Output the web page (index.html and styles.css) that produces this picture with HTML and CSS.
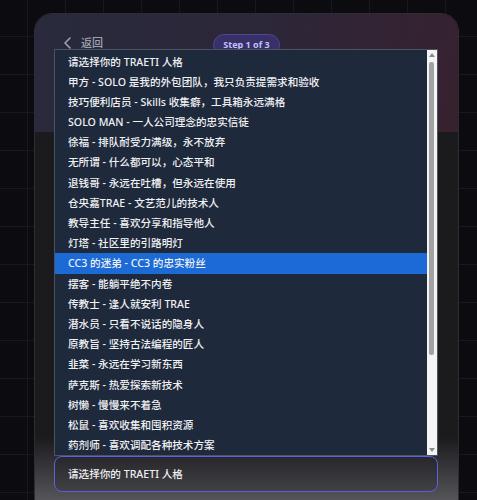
FILE: index.html
```html
<!DOCTYPE html>
<html lang="zh-CN">
<head>
  <meta charset="UTF-8">
  <meta name="viewport" content="width=device-width, initial-scale=1.0">
  <title>TRAETI 人格测试</title>
  <link rel="stylesheet" href="styles.css">
</head>
<body>
  <div class="card">
    <div class="card-head">
      <a class="back" href="#">
        <svg width="9" height="12" viewBox="0 0 9 12"><path d="M7 1 2 6l5 5" fill="none" stroke="currentColor" stroke-width="1.6" stroke-linecap="round" stroke-linejoin="round"/></svg>
        <span>返回</span>
      </a>
      <span class="step">Step 1 of 3</span>
      <span></span>
    </div>

    <div class="card-body">
      <div class="select-wrap">
        <div class="options">
          <ul class="option-list">
            <li>请选择你的 TRAETI 人格</li>
            <li>甲方 - SOLO 是我的外包团队，我只负责提需求和验收</li>
            <li>技巧便利店员 - Skills 收集癖，工具箱永远满格</li>
            <li>SOLO MAN - 一人公司理念的忠实信徒</li>
            <li>徐福 - 排队耐受力满级，永不放弃</li>
            <li>无所谓 - 什么都可以，心态平和</li>
            <li>退钱哥 - 永远在吐槽，但永远在使用</li>
            <li>仓央嘉TRAE - 文艺范儿的技术人</li>
            <li>教导主任 - 喜欢分享和指导他人</li>
            <li>灯塔 - 社区里的引路明灯</li>
            <li class="active">CC3 的迷弟 - CC3 的忠实粉丝</li>
            <li>摆客 - 能躺平绝不内卷</li>
            <li>传教士 - 逢人就安利 TRAE</li>
            <li>潜水员 - 只看不说话的隐身人</li>
            <li>原教旨 - 坚持古法编程的匠人</li>
            <li>韭菜 - 永远在学习新东西</li>
            <li>萨克斯 - 热爱探索新技术</li>
            <li>树懒 - 慢慢来不着急</li>
            <li>松鼠 - 喜欢收集和囤积资源</li>
            <li>药剂师 - 喜欢调配各种技术方案</li>
          </ul>
          <div class="scrollbar">
            <span class="arrow up"></span>
            <span class="thumb"></span>
            <span class="arrow down"></span>
          </div>
        </div>
        <div class="select">请选择你的 TRAETI 人格</div>
      </div>
    </div>
  </div>
</body>
</html>
```

FILE: styles.css
```css
* {
  box-sizing: border-box;
}

body {
  margin: 0;
  height: 500px;
  overflow: hidden;
  font-family: "Noto Sans", "Noto Sans CJK SC", sans-serif;
  background-color: #0b0b10;
  background-image:
    linear-gradient(#181824 1px, transparent 1px),
    linear-gradient(90deg, #181824 1px, transparent 1px);
  background-size: 38px 38px;
  background-position: 27px 36px;
}

.card {
  width: 425px;
  margin: 13px 0 0 34px;
  border: 1px solid #2c2c34;
  border-radius: 18px 18px 0 0;
  overflow: hidden;
}

.card-head {
  height: 118px;
  padding: 20px 28px 0;
  display: grid;
  grid-template-columns: 1fr auto 1fr;
  align-items: start;
  background: linear-gradient(100deg, #292a3d 0%, #2c2739 50%, #37212f 100%);
}

.back {
  display: flex;
  align-items: center;
  gap: 9px;
  margin-top: 2px;
  color: #9fa1b0;
  text-decoration: none;
  font-size: 11px;
  font-weight: 500;
  line-height: 14px;
}

.step {
  padding: 0 9px;
  height: 22px;
  line-height: 20px;
  border-radius: 11px;
  border: 1px solid #4c4694;
  background: #373168;
  color: #c2c0fa;
  font-size: 9px;
  font-weight: 700;
}

.card-body {
  height: 380px;
  padding: 324px 20px 0 19px;
  background: linear-gradient(#1b1b1e 0, #1b1b1e 305px, #55555a 369px);
}

.select-wrap {
  position: relative;
}

.select {
  height: 36px;
  padding-left: 13px;
  line-height: 34px;
  border: 1px solid #5d5fe0;
  border-radius: 8px;
  background: rgba(20, 20, 24, 0.2);
  color: #eeeef2;
  font-size: 10.6px;
  font-weight: 500;
}

/* open list, drawn above the field */
.options {
  position: absolute;
  left: 0;
  right: 0;
  bottom: 100%;
  height: 407px;
  display: flex;
  border: 1px solid #4b5262;
  background: #1e293b;
}

.option-list {
  flex: 1;
  margin: 0;
  padding: 1.5px 0 0;
  list-style: none;
}

.option-list li {
  height: 20.2px;
  line-height: 20.2px;
  padding-left: 13px;
  color: #f0f1f4;
  font-size: 10.6px;
  font-weight: 500;
  white-space: nowrap;
}

.option-list li.active {
  background: #1b6ad6;
}

.scrollbar {
  width: 10px;
  position: relative;
  background: #f4f4f4;
}

.thumb {
  position: absolute;
  left: 2px;
  top: 12px;
  width: 5px;
  height: 293px;
  border-radius: 2px;
  background: #a2a2a2;
}

.arrow {
  position: absolute;
  left: 2px;
  width: 0;
  height: 0;
  border-left: 3px solid transparent;
  border-right: 3px solid transparent;
}

.arrow.up {
  top: 3px;
  border-bottom: 4px solid #8a8a8a;
}

.arrow.down {
  bottom: 3px;
  border-top: 4px solid #8a8a8a;
}
```
